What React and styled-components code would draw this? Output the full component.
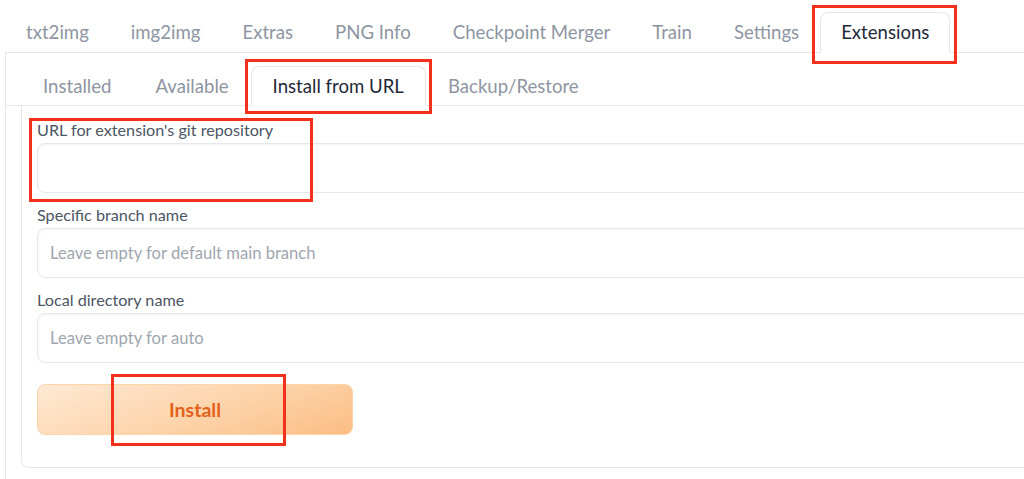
import React from "react";
import styled, { createGlobalStyle } from "styled-components";

const GlobalStyle = createGlobalStyle`
  html, body {
    margin: 0;
    padding: 0;
    background: #ffffff;
    overflow: hidden;
  }
  body {
    font-family: "Lato", "Noto Sans", sans-serif;
  }
`;

const topTabs = [
  "txt2img",
  "img2img",
  "Extras",
  "PNG Info",
  "Checkpoint Merger",
  "Train",
  "Settings",
  "Extensions",
];

const subTabs = ["Installed", "Available", "Install from URL", "Backup/Restore"];

const App = () => {
  return (
    <>
      <GlobalStyle />
      <Page>
        <TabRow $top>
          {topTabs.map((name) => (
            <Tab key={name} $active={name === "Extensions"} $pad={20}>
              {name}
              {name === "Extensions" && (
                <Mark $l={-9} $t={-8} $w={145} $h={59} />
              )}
            </Tab>
          ))}
        </TabRow>
        <OuterPanel>
          <TabRow>
            {subTabs.map((name) => (
              <Tab key={name} $active={name === "Install from URL"} $pad={21}>
                {name}
                {name === "Install from URL" && (
                  <Mark $l={-7} $t={-8} $w={187} $h={55} />
                )}
              </Tab>
            ))}
          </TabRow>
          <InnerPanel>
            <Field>
              <Label>URL for extension's git repository</Label>
              <Input />
              <Mark $l={-8} $t={-2} $w={284} $h={84} />
            </Field>
            <Field>
              <Label>Specific branch name</Label>
              <Input placeholder="Leave empty for default main branch" />
            </Field>
            <Field>
              <Label>Local directory name</Label>
              <Input placeholder="Leave empty for auto" />
            </Field>
            <ButtonWrap>
              <InstallButton>Install</InstallButton>
              <Mark $l={74} $t={-10} $w={175} $h={72} />
            </ButtonWrap>
          </InnerPanel>
        </OuterPanel>
      </Page>
    </>
  );
};

export default App;

const Page = styled.div`
  width: 1100px;
  padding: 12px 0 0 5px;
`;

const TabRow = styled.div`
  display: flex;
  align-items: flex-end;
  height: ${(p) => (p.$top ? "40px" : "39px")};
  padding-left: ${(p) => (p.$top ? "0" : "15px")};
  margin-top: ${(p) => (p.$top ? "0" : "13px")};
  border-bottom: 1px solid #e5e7eb;
`;

const Tab = styled.div`
  position: relative;
  box-sizing: border-box;
  height: calc(100% + 1px);
  margin-bottom: -1px;
  display: flex;
  align-items: center;
  padding: 0 ${(p) => p.$pad}px 1px;
  font-size: 18.6px;
  color: ${(p) => (p.$active ? "#1f2937" : "#8e95a2")};
  background: ${(p) => (p.$active ? "#ffffff" : "transparent")};
  border: 1px solid ${(p) => (p.$active ? "#e5e7eb" : "transparent")};
  border-bottom: 1px solid ${(p) => (p.$active ? "#ffffff" : "transparent")};
  border-radius: 8px 8px 0 0;
  white-space: nowrap;
`;

const OuterPanel = styled.div`
  margin-top: -1px;
  border-left: 1px solid #e5e7eb;
  border-top: 1px solid #e5e7eb;
  height: 440px;
`;

const InnerPanel = styled.div`
  margin-left: 15px;
  border: 1px solid #e5e7eb;
  border-top: none;
  border-radius: 0 0 8px 8px;
  padding: 14px 0 32px 15px;
  display: flex;
  flex-direction: column;
  gap: 12px;
`;

const Field = styled.div`
  position: relative;
  display: flex;
  flex-direction: column;
  gap: 3px;
`;

const Label = styled.div`
  font-size: 16.2px;
  line-height: 20px;
  color: #4b5563;
`;

const Input = styled.input`
  box-sizing: border-box;
  height: 50px;
  width: 100%;
  border: 1px solid #e5e7eb;
  border-radius: 8px;
  padding: 0 12px;
  font-family: inherit;
  font-size: 16.6px;
  color: #1f2937;
  background: #ffffff;
  box-shadow: inset 0 1px 3px rgba(0, 0, 0, 0.05);
  outline: none;

  &::placeholder {
    color: #a0a6b0;
  }
`;

const ButtonWrap = styled.div`
  position: relative;
  margin-top: 9px;
  width: 316px;
`;

const InstallButton = styled.button`
  box-sizing: border-box;
  width: 316px;
  height: 51px;
  border: 1px solid #fdd5ab;
  border-radius: 8px;
  background: linear-gradient(160deg, #fee9d4 0%, #fdd3a9 55%, #fbbd85 100%);
  font-family: inherit;
  font-size: 19.5px;
  font-weight: 700;
  color: #e2621b;
  cursor: pointer;
`;

const Mark = styled.span`
  position: absolute;
  box-sizing: border-box;
  left: ${(p) => p.$l}px;
  top: ${(p) => p.$t}px;
  width: ${(p) => p.$w}px;
  height: ${(p) => p.$h}px;
  border: 3px solid #f2301c;
  pointer-events: none;
`;
